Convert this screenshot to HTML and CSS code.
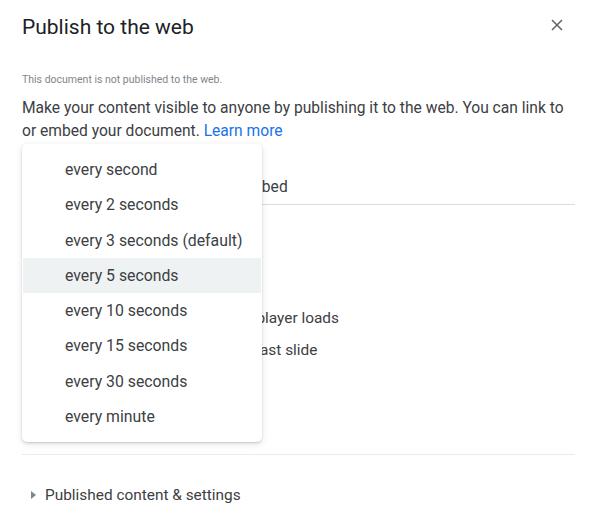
FILE: index.html
```html
<!DOCTYPE html>
<html lang="en">
<head>
  <meta charset="UTF-8" />
  <meta name="viewport" content="width=device-width, initial-scale=1.0"/>
  <title>Publish to the web</title>
  <link rel="stylesheet" href="styles.css">
</head>
<body>

<div class="dialog">
  <div class="head">
    <h1>Publish to the web</h1>
    <button class="close" aria-label="Close">
      <svg width="12" height="12" viewBox="0 0 12 12">
        <path d="M1 1 L11 11 M11 1 L1 11" stroke="#5f6368" stroke-width="1.5" fill="none"/>
      </svg>
    </button>
  </div>

  <p class="status">This document is not published to the web.</p>
  <p class="intro">Make your content visible to anyone by publishing it to the web. You can link to or embed your document. <a href="#">Learn more</a></p>

  <div class="tabs">
    <span class="tab active">Link</span>
    <span class="tab">Embed</span>
  </div>

  <div class="panel">
    <div class="label">Auto-advance slides:</div>
    <div class="select">every 3 seconds (default)</div>
    <label class="check"><span class="box"></span>Start slideshow as soon as the player loads</label>
    <label class="check"><span class="box"></span>Restart the slideshow after the last slide</label>
    <button class="btn">Publish</button>
  </div>

  <hr class="divider">

  <div class="more"><span class="caret"></span>Published content &amp; settings</div>

  <!-- dropdown open over the panel -->
  <ul class="menu">
    <li>every second</li>
    <li>every 2 seconds</li>
    <li>every 3 seconds (default)</li>
    <li class="hover">every 5 seconds</li>
    <li>every 10 seconds</li>
    <li>every 15 seconds</li>
    <li>every 30 seconds</li>
    <li>every minute</li>
  </ul>
</div>

</body>
</html>
```

FILE: styles.css
```css
body {
  margin: 0;
  background: #fff;
  font-family: Roboto, "Liberation Sans", sans-serif;
  color: #3c4043;
}
.dialog {
  position: relative;
  width: 553px;
  padding: 13px 27px 0 22px;
}
.head {
  display: flex;
  align-items: center;
  justify-content: space-between;
}
h1 {
  margin: 0;
  font-size: 21px;
  line-height: 28px;
  font-weight: 400;
  color: #202124;
}
.close {
  width: 24px;
  height: 24px;
  margin: 0 6px 4px 0;
  padding: 0;
  border: none;
  background: none;
  display: flex;
  align-items: center;
  justify-content: center;
}
.status {
  margin: 31px 0 0;
  font-size: 10.5px;
  line-height: 16px;
  color: #80868b;
}
.intro {
  margin: 9px 0 0;
  font-size: 15.6px;
  line-height: 23px;
}
.intro a {
  color: #1a73e8;
  text-decoration: none;
}
.tabs {
  display: grid;
  grid-template-columns: 161px 161px;
  margin-top: 22px;
  border-bottom: 1px solid #dadce0;
}
.tab {
  text-align: center;
  font-size: 15.6px;
  line-height: 20px;
  padding: 12px 0 7px;
}
.panel {
  padding-top: 21px;
  font-size: 15.4px;
}
.label {
  line-height: 20px;
}
.select {
  width: 220px;
  height: 36px;
  margin-top: 6px;
  border: 1px solid #dadce0;
  border-radius: 4px;
  box-sizing: border-box;
}
.check {
  display: flex;
  align-items: center;
  gap: 5px;
  height: 24px;
  line-height: 24px;
  margin-top: 18px;
}
.check + .check {
  margin-top: 8px;
}
.box {
  width: 16px;
  height: 16px;
  border: 2px solid #5f6368;
  border-radius: 2px;
  box-sizing: border-box;
}
.btn {
  margin-top: 12px;
  height: 36px;
  padding: 0 24px;
  border: none;
  border-radius: 4px;
  background: #1a73e8;
  color: #fff;
  font: 500 14px Roboto, sans-serif;
}
.divider {
  margin: 44px 0 0;
  border: none;
  border-top: 1px solid #e8eaed;
}
.more {
  display: flex;
  align-items: center;
  gap: 9px;
  margin-top: 30px;
  padding-left: 9px;
  font-size: 15.4px;
  line-height: 20px;
}
.caret {
  width: 0;
  height: 0;
  border-top: 4px solid transparent;
  border-bottom: 4px solid transparent;
  border-left: 5px solid #80868b;
}
.menu {
  position: absolute;
  top: 144px;
  left: 22px;
  width: 240px;
  margin: 0;
  padding: 8px 0;
  list-style: none;
  background: #fff;
  border-radius: 5px;
  box-shadow: 0 2px 6px rgba(60,64,67,0.15), 0 1px 2px rgba(60,64,67,0.2);
}
.menu li {
  height: 35.3px;
  line-height: 35.3px;
  padding: 0 1px 0 42px;
  margin: 0 1px;
  font-size: 15.8px;
  color: #3c4043;
}
.menu li.hover {
  background: #eff2f2;
}
```
